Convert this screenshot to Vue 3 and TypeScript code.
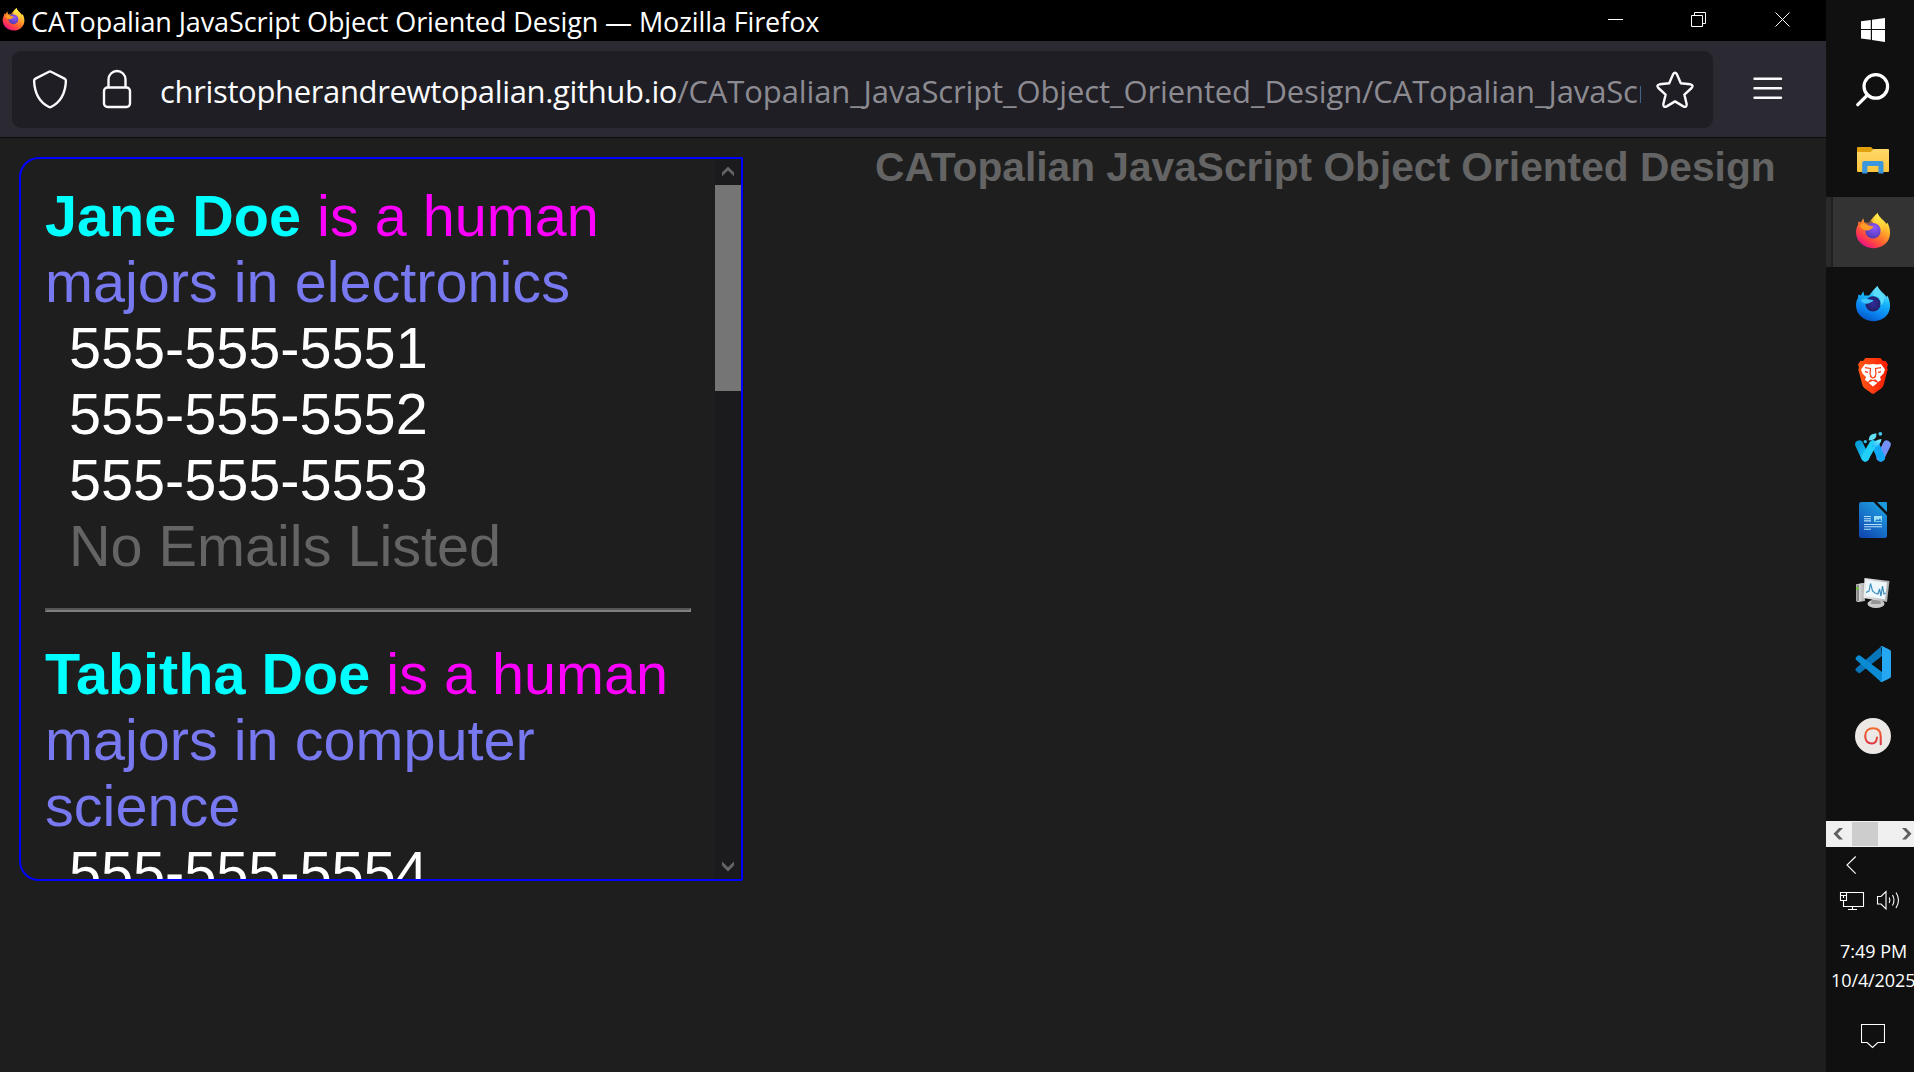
<script setup lang="ts">
interface Person {
  name: string
  kind: string
  major: string
  phones: string[]
  emails: string[]
}

const people: Person[] = [
  {
    name: 'Jane Doe',
    kind: 'is a human',
    major: 'majors in electronics',
    phones: ['555-555-5551', '555-555-5552', '555-555-5553'],
    emails: [],
  },
  {
    name: 'Tabitha Doe',
    kind: 'is a human',
    major: 'majors in computer science',
    phones: ['555-555-5554'],
    emails: [],
  },
]
</script>

<template>
  <div class="screen">
    <main class="window">
      <header class="titlebar">
        <svg class="title-logo" viewBox="0 0 36 36"><use href="#fox" /></svg>
        <span class="title-text">CATopalian JavaScript Object Oriented Design — Mozilla Firefox</span>
        <svg class="controls" viewBox="0 0 252 41" fill="none" stroke="#fff">
          <path d="M34 19.5h15M117.500 15.500h11v11h-11zM120.500 15v-2.500h11v11H129M201.500 12.500l14 14M215.500 12.500l-14 14" />
        </svg>
      </header>
      <div class="toolbar">
        <div class="urlbar">
          <svg class="shield" viewBox="0 0 36 40" fill="none" stroke="#fbfbfe" stroke-width="2.400" stroke-linejoin="round">
            <path d="M17 2.800Q18 2.300 19 2.800L32.500 9.600Q34 10.400 33.900 12C33.400 24 28 33.500 19 38Q18 38.500 17 38C8 33.500 2.600 24 2.100 12Q2 10.400 3.500 9.600Z" />
          </svg>
          <svg class="lock" viewBox="0 0 30 40" fill="none" stroke="#fbfbfe" stroke-width="2.400">
            <rect x="2" y="18.500" width="26" height="19.500" rx="3.500" /><path d="M6.500 18.500V10.500a8.500 8.500 0 0 1 17 0v8" />
          </svg>
          <div class="address"><span class="domain">christopherandrewtopalian.github.io</span><span class="path">/CATopalian_JavaScript_Object_Oriented_Design/CATopalian_JavaScript</span></div>
          <svg class="star" viewBox="0 0 38 38" fill="none" stroke="#fbfbfe" stroke-width="2.400" stroke-linejoin="round">
            <path d="M17.100 3.200Q19 0.200 20.900 3.200L24.800 12.200L34.300 13.300Q38 14.200 35.600 17L28.400 23.600L30.700 33.200Q30.700 37 27.300 35.400L19 30.400L10.700 35.400Q7.300 37 7.300 33.200L9.600 23.600L2.400 17Q0 14.200 3.700 13.300L13.200 12.200Z" />
          </svg>
        </div>
        <svg class="burger" viewBox="0 0 30 22" fill="none" stroke="#fbfbfe" stroke-width="2.400" stroke-linecap="round">
          <path d="M1.500 1.700h26.500M1.500 11.200h26.500M1.500 20.700h26.500" />
        </svg>
      </div>

      <section class="page">
        <div class="panel">
          <div class="records">
            <template v-for="(p, i) in people" :key="p.name">
              <hr v-if="i > 0" />
              <div><b class="name">{{ p.name }}</b> <span class="kind">{{ p.kind }}</span></div>
              <div class="major">{{ p.major }}</div>
              <div v-for="n in p.phones" :key="n" class="phone">{{ n }}</div>
              <div v-if="!p.emails.length && i === 0" class="none">No Emails Listed</div>
            </template>
          </div>
          <div class="scrollbar">
            <svg viewBox="0 0 26 26"><path d="M7 13.500L13 7.500L19 13.500V17.200L13 11.500L7 17.200Z" fill="#646464" /></svg>
            <div class="thumb"></div>
            <svg class="down" viewBox="0 0 26 26"><path d="M7 8.500L13 14.200L19 8.500V12.500L13 18.500L7 12.500Z" fill="#646464" /></svg>
          </div>
        </div>
        <h1>CATopalian JavaScript Object Oriented Design</h1>
      </section>
    </main>

    <aside class="taskbar">
      <svg class="start" viewBox="0 0 24 24" fill="#fff">
        <path d="M0 3.300L9.800 1.900V11H0ZM11 1.700L24 0V11H11ZM0 12H9.800V21.700L0 20.400ZM11 12H24V24L11 22Z" />
      </svg>
      <svg class="search" viewBox="0 0 34 34" fill="none" stroke="#fff">
        <circle cx="19.800" cy="13.400" r="11.800" stroke-width="3.200" /><path d="M11.500 22L1.800 31.700" stroke-width="3.200" stroke-linecap="round" />
      </svg>

      <div class="slot">
        <svg viewBox="0 0 36 36">
          <defs><linearGradient id="fold" x1="0" y1="0" x2="0" y2="1"><stop stop-color="#ffd96a" /><stop offset="1" stop-color="#fbc53c" /></linearGradient></defs>
          <path d="M2 6Q2 5 3 5H16L18.500 7.500L16 10H2Z" fill="#e2a00c" />
          <path d="M2 10H15.500L18.500 7H33Q34 7 34 8V29Q34 30 33 30H3Q2 30 2 29Z" fill="url(#fold)" />
          <path d="M7.200 31.500V21Q7.200 19 9.200 19H26.500Q28.500 19 28.500 21V31.500H23.400V24H12.400V31.500Z" fill="#3a96dd" />
        </svg>
      </div>
      <div class="slot active">
        <svg viewBox="0 0 36 36">
          <defs>
            <linearGradient id="fxbody" x1=".85" y1=".1" x2=".25" y2=".95"><stop stop-color="#fff44f" /><stop offset=".3" stop-color="#ffb52e" /><stop offset=".6" stop-color="#ff6b2c" /><stop offset=".82" stop-color="#ff3750" /><stop offset="1" stop-color="#e31587" /></linearGradient>
            <radialGradient id="fxcore" cx=".6" cy=".3" r=".8"><stop stop-color="#9059ff" /><stop offset="1" stop-color="#4a35a8" /></radialGradient>
            <linearGradient id="fxflame" x1=".6" y1="0" x2=".5" y2="1"><stop stop-color="#fff44f" /><stop offset="1" stop-color="#ffc02e" stop-opacity=".6" /></linearGradient>
            <g id="fox">
              <path d="M22.500 0C24.500 5 29 7 31.500 11L32.300 9.500C37 18 35.500 27 29.500 31.500C22 37 12 36 6 30.500C0 25 0 16.500 3 12L3.400 8.500L5.800 9.500L8.300 5.200L9.300 9.500L14 9.500C17 6 19 3 22.500 0Z" fill="url(#fxbody)" />
              <path d="M9.300 9.500Q14 9 16 7.500L18.500 10.500L12.500 12Z" fill="#3a3350" fill-opacity=".55" />
              <circle cx="18" cy="17.800" r="7.700" fill="url(#fxcore)" />
              <path d="M22.500 0C20.500 4 17.500 7 18.500 10C23 9.500 27 14 25.500 19.500C28.500 18 29.500 14 29.200 10.500C27 7 23.500 5 22.500 0Z" fill="url(#fxflame)" />
              <path d="M4.500 12.500C8 9.500 11 10 12.500 12L18.500 13.500C17.500 16 15.500 16 13.500 17.500C10.500 18 7 17 4.500 12.500Z" fill="#ff9a24" />
            </g>
          </defs>
          <use href="#fox" />
        </svg>
      </div>
      <div class="slot">
        <svg viewBox="0 0 36 36">
          <defs>
            <linearGradient id="dvbody" x1=".75" y1=".05" x2=".35" y2="1"><stop stop-color="#80f0ff" /><stop offset=".35" stop-color="#19b8fb" /><stop offset=".75" stop-color="#087fee" /><stop offset="1" stop-color="#0758c5" /></linearGradient>
            <radialGradient id="dvcore"><stop stop-color="#312d99" /><stop offset="1" stop-color="#202069" /></radialGradient>
          </defs>
          <path d="M22.500 0C24.500 5 29 7 31.500 11L32.300 9.500C37 18 35.500 27 29.500 31.500C22 37 12 36 6 30.500C0 25 0 16.500 3 12L3.400 8.500L5.800 9.500L8.300 5.200L9.300 9.500L14 9.500C17 6 19 3 22.500 0Z" fill="url(#dvbody)" />
          <circle cx="18" cy="17.800" r="7.600" fill="url(#dvcore)" />
          <path d="M22.500 0C20.500 4 17.500 7 18.500 10C23 9.500 27 14 25.500 19.500C28.500 18 29.500 14 29.200 10.500C27 7 23.500 5 22.500 0Z" fill="#5cdcfb" />
          <path d="M5.500 14C8 12.500 11 12.500 12.500 13L18.500 14.300C17.500 16.500 15.500 16 13.500 17.500C10.500 18 7.500 17.500 5.500 14Z" fill="#3cc4f8" />
        </svg>
      </div>
      <div class="slot">
        <svg viewBox="0 0 36 36">
          <defs><linearGradient id="brv"><stop stop-color="#ff5a13" /><stop offset=".5" stop-color="#ff3a12" /><stop offset="1" stop-color="#f51a00" /></linearGradient></defs>
          <path d="M10.500 0H25.500L28 3L30.500 2.800L33 6.500L32 9.500L32.700 11.500L28.600 27Q28 29 26.500 30.200L19.500 35.300Q18 36.300 16.500 35.300L9.500 30.200Q8 29 7.400 27L3.300 11.500L4 9.500L3 6.500L5.500 2.800L8 3Z" fill="url(#brv)" />
          <path d="M10 6L14 6.500L18 6L22 6.500L26 6L30 11.500L28.500 15.500L25 19L26 22L23 24L20.500 21.300L18 22L15.500 21.300L13 24L10 22L11 19L7.500 15.500L6 11.500Z" fill="#fff" />
          <path d="M13.500 24.800L18 22.800L22.500 24.800L18 28.500Z" fill="#fff" />
          <path d="M10 9.700L15.500 10.500L15 16L16.500 19.500M26 9.700L20.500 10.500L21 16L19.500 19.500M10 13.600L13 14.300M26 13.600L23 14.300M15 18.500L18 20L21 18.500" fill="none" stroke="#ff3a12" stroke-width="1.200" />
        </svg>
      </div>
      <div class="slot">
        <svg viewBox="0 0 36 36" fill="none" stroke-linecap="round">
          <defs>
            <linearGradient id="wf1" x1="0" y1="0" x2="1" y2="1"><stop stop-color="#0a9ed8" /><stop offset="1" stop-color="#18c8ff" /></linearGradient>
            <linearGradient id="wf2" x1="1" y1="0" x2="0" y2="1"><stop stop-color="#8af4ff" /><stop offset="1" stop-color="#10b4fa" /></linearGradient>
          </defs>
          <path d="M31.800 14.500L25.500 27.500" stroke="#7290f5" stroke-width="8" />
          <path d="M20.500 15L26 27.500" stroke="#12a8f8" stroke-width="8" />
          <path d="M4.200 14.500L10.200 27.500" stroke="url(#wf1)" stroke-width="8" />
          <path d="M10.200 27.500L18 14" stroke="#22cff9" stroke-width="7.500" />
          <path d="M16.500 16Q19 9.500 26.500 9Q26 16 18 17Z" fill="url(#wf2)" />
          <path d="M13.500 10.500Q14 3 21.500 3.500Q22 10.500 13.500 10.500Z" fill="#62dff2" />
          <circle cx="25.300" cy="3.800" r="1.900" fill="#42c8e8" /><circle cx="10.300" cy="11.600" r="1.700" fill="#32c0e8" />
        </svg>
      </div>
      <div class="slot">
        <svg viewBox="0 0 36 36">
          <defs><linearGradient id="wrt" x1=".8" y1="0" x2=".2" y2="1"><stop stop-color="#1fa2e2" /><stop offset="1" stop-color="#1149b3" /></linearGradient></defs>
          <path d="M6.500 0H18.500L32 13.500V33.500Q32 36 29.500 36H6.500Q4 36 4 33.500V2.500Q4 0 6.500 0Z" fill="url(#wrt)" />
          <path d="M22 0H31Q32 0 32 1V10Z" fill="#1a9adc" />
          <path d="M9 14.500h7M9 16.700h7M9 18.900h7M9 22.500h18M9 24.700h18M9 27.200h7" stroke="#b4def5" stroke-width="1.100" />
          <rect x="19" y="14" width="8" height="5.700" fill="#9be0f6" /><path d="M20 19L22 17L23.500 18.200L25 16L26.500 19Z" fill="#1a78c9" />
        </svg>
      </div>
      <div class="slot">
        <svg viewBox="0 0 36 36">
          <defs><linearGradient id="mon"><stop stop-color="#eeeeee" /><stop offset="1" stop-color="#a9a9a9" /></linearGradient></defs>
          <path d="M1 10.500L7 9H10V27L3 28L1 27Z" fill="url(#mon)" /><path d="M1.300 11L4 10.500V27H1.300Z" fill="#8a8a8a" /><circle cx="2.400" cy="14.500" r="1.200" fill="#62d414" />
          <ellipse cx="21" cy="29.700" rx="8.500" ry="4.300" fill="#c9c9c9" /><path d="M17 24L25 25L26 30H16Z" fill="#969696" />
          <path d="M9.500 4L34.500 7L32 28L8.500 24Z" fill="url(#mon)" /><path d="M11.300 6L32 8.500L30 25.500L10.500 22Z" fill="#eef7fc" />
          <path d="M11 18.500L14 17L15.500 9.500L17.500 17L20 19L23 20L24.500 15L26 22L27.500 12L29 20L30.500 19" fill="none" stroke="#3c8fbd" stroke-width="1.200" />
        </svg>
      </div>
      <div class="slot">
        <svg viewBox="0 0 36 36">
          <path d="M0.700 22.500L26 0.500L27 10L5 27Q4 27.500 3 26.500L0.700 24.500Q0 23.500 0.700 22.500Z" fill="#0874b9" />
          <path d="M0.700 13.500L0.700 11.500L3 9.500Q4 8.800 5 9.500L27 26V35.500Q26 36 25 35Z" fill="#0a8bd4" />
          <path d="M25.500 0.300Q26.300-.2 27 .1L34.700 3.700Q36 4.400 36 5.800V30.200Q36 31.600 34.700 32.300L27 35.900Q26 36.200 25 35.300Q27 35.500 27 33.500V2.500Q27 .5 25.500 .3Z" fill="#26a7f2" />
        </svg>
      </div>
      <div class="slot">
        <svg viewBox="0 0 36 36">
          <defs><linearGradient id="ring" x1="0" y1="0" x2="0" y2="1"><stop stop-color="#f26a2c" /><stop offset="1" stop-color="#e03542" /></linearGradient></defs>
          <circle cx="18" cy="18" r="18" fill="#ece8e6" />
          <path d="M22 19.500C21.500 24 20 25.500 17 25.500C12.500 25.500 10.200 22.500 10.200 18C10.200 13 13.500 10.200 18 10.200C23 10.200 25.700 13 25.700 18V26.300" fill="none" stroke="url(#ring)" stroke-width="2.100" stroke-linecap="round" />
        </svg>
      </div>

      <div class="hscroll">
        <svg viewBox="0 0 26 26"><path d="M17 7H13L7.500 12.800L13 18.500H17L11.500 12.800Z" fill="#606060" /></svg>
        <div class="hthumb"></div>
        <svg class="next" viewBox="0 0 12 26"><path d="M0 7H4L9.500 12.800L4 18.500H0L5.500 12.800Z" fill="#606060" /></svg>
      </div>
      <svg class="tray" viewBox="0 0 88 66" fill="none" stroke="#fff" stroke-width="1.100">
        <path d="M29.700 9.500L21 18L29.700 26.700" />
        <path d="M20.500 45.500H37.500V59.500H17.500V54M14.500 45.500h6v8h-6zM14.500 48.500h6M17.500 48v3M26.500 60v2.500M22 62.500h9" />
        <path d="M51.500 49.500h3.500l5-5v17.500l-5-5h-3.500zM63.200 50.500q1.500 2.700 0 5.500M66.500 48q3 5.200 0 10.500M70 45.500q5 7.500 0 15.500" />
      </svg>
      <div class="clock"><span class="time">7:49 PM</span><span class="date">10/4/2025</span></div>
      <svg class="notes" viewBox="0 0 24 25" fill="none" stroke="#fff" stroke-width="1.100"><path d="M.5.500h23v18h-6.700l-5.300 5l-5.300-5H.5z" /></svg>
    </aside>
  </div>
</template>

<style>
body {
  margin: 0;
  background: #1e1e1e;
}
</style>

<style scoped>
svg { display: block; flex: none; }
.screen { display: flex; width: 1914px; height: 1072px; overflow: hidden; background: #1e1e1e; }
.window { width: 1826px; display: flex; flex-direction: column; overflow: hidden; }
.titlebar { height: 41px; background: #000; display: flex; align-items: flex-start; }
.title-logo { width: 23px; height: 23px; margin: 8px 0 0 2px; }
.title-text { margin-left: 6px; color: #fff; font: 27px/41px "Open Sans", sans-serif; letter-spacing: -0.11px; white-space: nowrap; padding-top: 1px; }
.controls { width: 252px; height: 41px; margin-left: auto; }
.toolbar { height: 96px; box-sizing: border-box; background: #2b2a33; box-shadow: 0 1px 0 #0c0c0d; display: flex; align-items: center; padding: 0 43px 0 12px; justify-content: space-between; }
.urlbar { width: 1701px; height: 77px; margin-top: 1px; background: #1f1e25; border-radius: 9px; display: flex; align-items: center; box-sizing: border-box; padding-left: 20px; }
.shield { width: 36px; height: 40px; margin-top: -2px; }
.lock { width: 30px; height: 40px; margin: -1px 0 0 34px; }
.address { width: 1481px; margin-left: 28px; overflow: hidden; white-space: nowrap; color: #fbfbfe; font: 31px/60px "Open Sans", sans-serif; padding-top: 3px; }
.domain { letter-spacing: -0.35px; }
.path { color: #8c8b91; letter-spacing: -0.12px; }
.star { width: 38px; height: 38px; margin-left: 15px; }
.burger { width: 30px; height: 22px; margin-top: -2px; }
.page { flex: 1; display: flex; align-items: flex-start; padding: 20px 0 0 19px; }
.panel { width: 724px; height: 724px; box-sizing: border-box; border: 2px solid #00f; border-radius: 20px 1px 2px 20px; display: flex; overflow: hidden; }
.records { flex: 1; padding: 24px; font: 57.6px/66px "Liberation Sans", Arial, sans-serif; color: #fff; }
.name { color: #0ff; }
.kind { color: #f0f; }
.major { color: #7878f0; }
.phone, .none { padding-left: 24px; }
.none { color: #646464; }
hr { margin: 29px 0; height: 0; border: 2px solid; border-color: #555 #808080 #808080 #555; }
.scrollbar { width: 26px; background: #1b1b1d; display: flex; flex-direction: column; }
.scrollbar svg { width: 26px; height: 26px; }
.thumb { height: 206px; background: #757575; }
.down { margin-top: auto; }
h1 { margin: -13px 0 0 132px; font: bold 40.7px/46px "Liberation Sans", Arial, sans-serif; color: #646464; white-space: nowrap; }
.taskbar { width: 88px; background: #101010; display: flex; flex-direction: column; overflow: hidden; }
.start { width: 24px; height: 24px; margin: 18px 0 0 35px; }
.search { width: 34px; height: 34px; margin: 31px 0 17px 30px; }
.slot { height: 72px; flex: none; box-sizing: border-box; padding: 18px 0 0 29px; }
.slot svg { width: 36px; height: 36px; }
.active { padding-top: 17px; background: linear-gradient(90deg, #2a2a2a 5px, #202020 5px 7px, #333 7px) 0 1px / 100% 70px no-repeat; }
.hscroll { height: 26px; margin-top: 49px; background: #f0f0f0; display: flex; flex: none; align-items: center; }
.hscroll svg { width: 26px; height: 26px; }
.hthumb { width: 26px; height: 24px; background: #cdcdcd; }
.hscroll .next { margin-left: auto; width: 12px; }
.tray { width: 88px; height: 66px; }
.clock { margin-top: 24px; height: 61px; flex: none; display: flex; flex-direction: column; color: #fff; font: 18px/29px "Open Sans", sans-serif; white-space: nowrap; }
.time { padding-left: 14px; }
.date { padding-left: 5px; letter-spacing: -0.1px; }
.notes { width: 24px; height: 25px; margin: 26px 0 0 35px; }
</style>
